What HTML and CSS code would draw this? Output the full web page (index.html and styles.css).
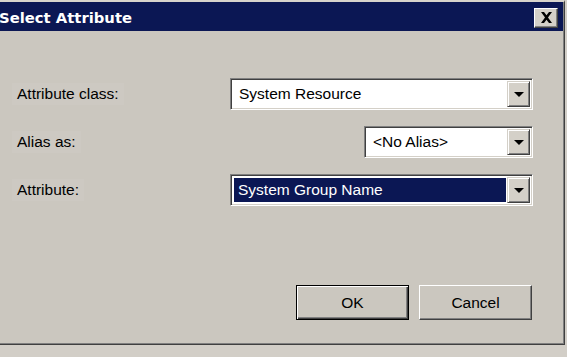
FILE: index.html
```html
<!DOCTYPE html>
<html>
<head>
<meta charset="utf-8">
<link rel="stylesheet" href="styles.css">
</head>
<body>
<div class="dialog">
  <div class="titlebar">
    <span class="title">Select Attribute</span>
    <span class="close-btn"><svg width="13" height="11" viewBox="0 0 13 11"><path d="M1 0h3l2.5 3.3 2.5-3.3h3l-4 5.5 4 5.5h-3l-2.5-3.3-2.5 3.3h-3l4-5.5z" fill="#000"/></svg></span>
  </div>
  <div class="content">
    <div class="form">
      <span class="label">Attribute class:</span>
      <div class="combo wide"><span class="field">System Resource</span><span class="drop"><i class="arrow"></i></span></div>
      <span class="label">Alias as:</span>
      <div class="combo narrow"><span class="field">&lt;No Alias&gt;</span><span class="drop"><i class="arrow"></i></span></div>
      <span class="label">Attribute:</span>
      <div class="combo wide"><span class="field selected">System Group Name</span><span class="drop"><i class="arrow"></i></span></div>
    </div>
    <div class="buttons">
      <button class="btn default">OK</button>
      <button class="btn">Cancel</button>
    </div>
  </div>
</div>
</body>
</html>
```
FILE: styles.css
```css
html, body {
  margin: 0;
  padding: 0;
}
body {
  background: #d2cec7;
  width: 567px;
  height: 357px;
  overflow: hidden;
  font-family: "Liberation Sans", Arial, sans-serif;
}
.dialog {
  box-sizing: border-box;
  width: 565px;
  height: 345px;
  background: #cbc7bf;
  border-top: 2px solid #d8d4cc;
  border-right: 1px solid #404040;
  border-bottom: 1px solid #404040;
  box-shadow: inset -1px -1px 0 #808080;
  display: flex;
  flex-direction: column;
}
.titlebar {
  height: 29px;
  margin-right: 1px;
  background: #0b1754;
  display: flex;
  align-items: center;
  justify-content: space-between;
  padding-right: 5px;
  flex-shrink: 0;
}
.title {
  color: #fff;
  font-family: "DejaVu Sans", Verdana, sans-serif;
  font-weight: bold;
  font-size: 14.8px;
  margin-left: -1px;
  margin-top: 1px;
}
.close-btn {
  box-sizing: border-box;
  width: 24px;
  height: 20px;
  background: #d4d0c8;
  border-top: 1px solid #fff;
  border-left: 1px solid #fff;
  border-right: 1px solid #404040;
  border-bottom: 1px solid #404040;
  box-shadow: inset -1px -1px 0 #808080;
  display: flex;
  align-items: center;
  justify-content: center;
  margin-top: 2px;
}
.content {
  flex: 1;
  display: flex;
  flex-direction: column;
  padding: 47px 31px 24px 12px;
}
.form {
  display: grid;
  grid-template-columns: 1fr 303px;
  grid-auto-rows: 32px;
  row-gap: 16px;
  align-items: center;
}
.label {
  justify-self: start;
  font-size: 15.5px;
  color: #000;
  background: #cdc9c2;
  padding: 2px 5px;
}
.combo {
  box-sizing: border-box;
  height: 32px;
  justify-self: end;
  display: flex;
  background: #fff;
  border-top: 1px solid #808080;
  border-left: 1px solid #808080;
  border-right: 1px solid #fff;
  border-bottom: 1px solid #fff;
  box-shadow: inset 1px 1px 0 #404040, inset -1px -1px 0 #d4d0c8;
  padding: 2px;
}
.combo.wide { width: 303px; }
.combo.narrow { width: 169px; }
.field {
  flex: 1;
  display: flex;
  align-items: center;
  font-size: 15.5px;
  color: #000;
  padding-left: 5px;
  margin: 1px;
}
.field.selected {
  background: #0b1754;
  color: #fff;
  padding-left: 4px;
}
.drop {
  box-sizing: border-box;
  width: 23px;
  background: #d4d0c8;
  border-top: 1px solid #d4d0c8;
  border-left: 1px solid #d4d0c8;
  border-right: 1px solid #404040;
  border-bottom: 1px solid #404040;
  box-shadow: inset 1px 1px 0 #fff, inset -1px -1px 0 #808080;
  display: flex;
  align-items: center;
  justify-content: center;
}
.arrow {
  width: 0;
  height: 0;
  border-left: 5px solid transparent;
  border-right: 5px solid transparent;
  border-top: 5px solid #000;
  margin-top: 1px;
}
.buttons {
  margin-top: auto;
  display: flex;
  justify-content: flex-end;
  gap: 10px;
  padding-right: 1px;
}
.btn {
  box-sizing: border-box;
  width: 113px;
  height: 35px;
  font-family: "Liberation Sans", Arial, sans-serif;
  font-size: 15.5px;
  color: #000;
  background: #cbc7bf;
  border-top: 1px solid #fff;
  border-left: 1px solid #fff;
  border-right: 1px solid #404040;
  border-bottom: 1px solid #404040;
  box-shadow: inset -1px -1px 0 #808080;
  padding: 0;
}
.btn.default {
  border: 1px solid #000;
  box-shadow: inset 1px 1px 0 #fff, inset -1px -1px 0 #404040, inset -2px -2px 0 #808080;
}
```
